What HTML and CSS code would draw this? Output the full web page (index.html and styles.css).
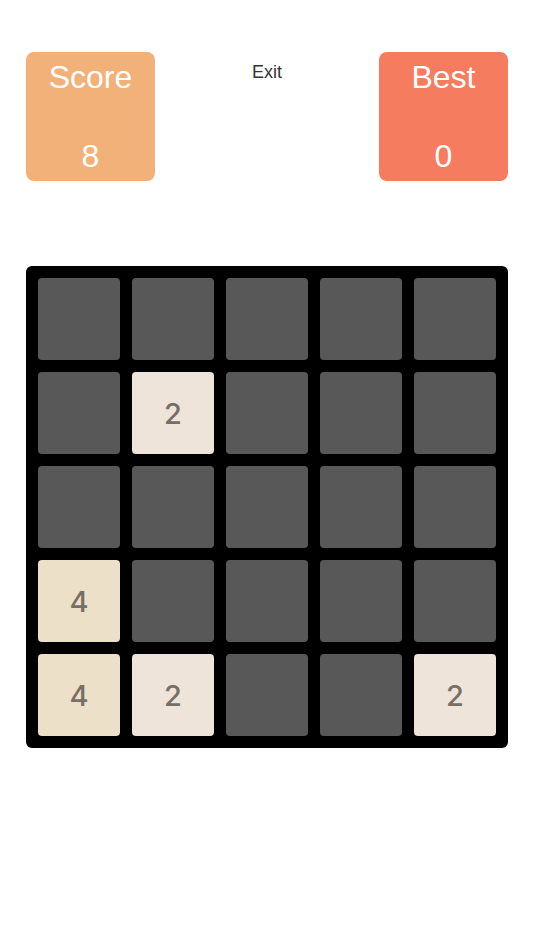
FILE: index.html
```html
<!DOCTYPE html>
<html>
<head>
<meta charset="utf-8">
<link rel="stylesheet" href="styles.css">
</head>
<body>
<div class="page">
  <div class="header">
    <div class="box score">
      <div class="label">Score</div>
      <div class="value">8</div>
    </div>
    <div class="exit">Exit</div>
    <div class="box best">
      <div class="label">Best</div>
      <div class="value">0</div>
    </div>
  </div>
  <div class="board">
    <div class="tile"></div><div class="tile"></div><div class="tile"></div><div class="tile"></div><div class="tile"></div>
    <div class="tile"></div><div class="tile t2">2</div><div class="tile"></div><div class="tile"></div><div class="tile"></div>
    <div class="tile"></div><div class="tile"></div><div class="tile"></div><div class="tile"></div><div class="tile"></div>
    <div class="tile t4">4</div><div class="tile"></div><div class="tile"></div><div class="tile"></div><div class="tile"></div>
    <div class="tile t4">4</div><div class="tile t2">2</div><div class="tile"></div><div class="tile"></div><div class="tile t2">2</div>
  </div>
</div>
</body>
</html>
```

FILE: styles.css
```css
html, body {
  margin: 0;
  padding: 0;
  background: #ffffff;
}
.page {
  padding: 52px 26px 0;
  font-family: "Liberation Sans", Arial, sans-serif;
}
.header {
  display: flex;
  justify-content: space-between;
  align-items: flex-start;
}
.box {
  width: 129px;
  height: 129px;
  border-radius: 8px;
  color: #ffffff;
  display: flex;
  flex-direction: column;
  justify-content: space-between;
  align-items: center;
  padding: 6px 0;
  box-sizing: border-box;
  font-size: 32px;
  line-height: 38px;
}
.score { background: #f2b179; }
.best { background: #f67c5f; }
.exit {
  margin-top: 9px;
  font-size: 18px;
  line-height: 22px;
  color: #333333;
}
.board {
  margin-top: 85px;
  width: 482px;
  height: 482px;
  box-sizing: border-box;
  background: #000000;
  border-radius: 6px;
  padding: 12px;
  display: grid;
  grid-template-columns: repeat(5, 82px);
  grid-template-rows: repeat(5, 82px);
  gap: 12px;
}
.tile {
  background: #585858;
  border-radius: 4px;
  display: flex;
  align-items: center;
  justify-content: center;
  font-family: Inter, "Liberation Sans", sans-serif;
  font-weight: 500;
  font-size: 29px;
  color: #776e65;
}
.t2 { background: #eee4da; }
.t4 { background: #ede0c8; }
```
